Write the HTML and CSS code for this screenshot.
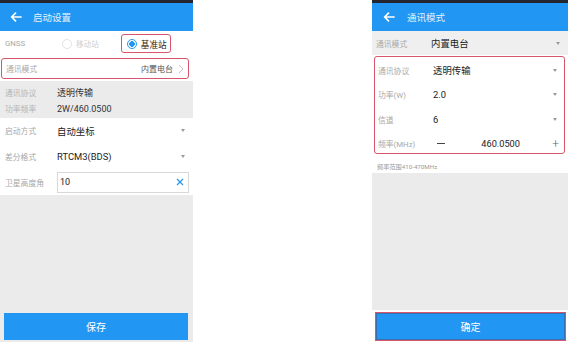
FILE: index.html
```html
<!DOCTYPE html>
<html lang="zh">
<head>
<meta charset="utf-8">
<link rel="stylesheet" href="styles.css">
</head>
<body>
<div class="page">
  <section class="screen left">
    <div class="status"></div>
    <header class="bar">
      <svg class="back" viewBox="0 0 12 10" width="12" height="10"><path d="M11 5H2M5.5 1.2L1.6 5l3.9 3.8" fill="none" stroke="#fff" stroke-width="1.7" stroke-linecap="round" stroke-linejoin="round"/></svg>
      <span class="title">启动设置</span>
    </header>
    <div class="row gnss">
      <span class="lbl">GNSS</span>
      <span class="radio off"><i class="dot"></i>移动站</span>
      <span class="radio on hl"><i class="dot"></i>基准站</span>
    </div>
    <div class="row modewrap">
      <div class="mode hl">
        <span class="lbl">通讯模式</span>
        <span class="mval">内置电台</span>
        <svg class="chev" viewBox="0 0 6 10" width="6" height="10"><path d="M1 1l4 4-4 4" fill="none" stroke="#c4c4c4" stroke-width="1"/></svg>
      </div>
    </div>
    <div class="info">
      <div class="iline"><span class="lbl">通讯协议</span><span class="val">透明传输</span></div>
      <div class="iline"><span class="lbl">功率频率</span><span class="val">2W/460.0500</span></div>
    </div>
    <div class="row sel"><span class="lbl">启动方式</span><span class="val">自动坐标</span><i class="tri"></i></div>
    <div class="row sel"><span class="lbl">差分格式</span><span class="val">RTCM3(BDS)</span><i class="tri"></i></div>
    <div class="row sel"><span class="lbl">卫星高度角</span>
      <div class="input"><span>10</span>
        <svg class="clear" viewBox="0 0 8 8" width="8" height="8"><path d="M1 1l6 6M7 1L1 7" stroke="#2196f3" stroke-width="1.2"/></svg>
      </div>
    </div>
    <div class="fill"></div>
    <div class="foot"><div class="btn">保存</div></div>
  </section>

  <section class="screen right">
    <div class="status"></div>
    <header class="bar">
      <svg class="back" viewBox="0 0 12 10" width="12" height="10"><path d="M11 5H2M5.5 1.2L1.6 5l3.9 3.8" fill="none" stroke="#fff" stroke-width="1.7" stroke-linecap="round" stroke-linejoin="round"/></svg>
      <span class="title">通讯模式</span>
    </header>
    <div class="row rsel first"><span class="lbl">通讯模式</span><span class="val">内置电台</span><i class="tri"></i></div>
    <div class="box hl">
      <div class="row rsel"><span class="lbl">通讯协议</span><span class="val">透明传输</span><i class="tri"></i></div>
      <div class="row rsel"><span class="lbl">功率(W)</span><span class="val">2.0</span><i class="tri"></i></div>
      <div class="row rsel"><span class="lbl">信道</span><span class="val">6</span><i class="tri"></i></div>
      <div class="row rsel freq"><span class="lbl">频率(MHz)</span>
        <span class="minus"></span>
        <span class="num">460.0500</span>
        <span class="plus">+</span>
      </div>
    </div>
    <div class="hint">频率范围410-470MHz</div>
    <div class="fill"></div>
    <div class="foot rfoot"><div class="btn hlbtn">确定</div></div>
  </section>
</div>
</body>
</html>
```
FILE: styles.css
```css
* { box-sizing: border-box; margin: 0; padding: 0; }
body { background: #fff; font-family: Roboto, "Noto Sans CJK SC", sans-serif; }
.page { display: flex; justify-content: space-between; width: 568px; height: 342px; }
.screen { display: flex; flex-direction: column; height: 342px; background: #fff; }
.left { width: 193px; }
.right { width: 196px; }
.status { height: 3px; background: #23262e; }
.bar { height: 28px; background: #2196f3; display: flex; align-items: center; }
.left .back { margin-left: 10px; }
.right .back { margin-left: 11px; }
.title { color: #e3f1fd; font-size: 9.5px; margin-left: 11px; font-family: "Noto Sans CJK SC", sans-serif; }
.left .title { margin-left: 11px; }
.right .title { margin-left: 12px; }
.lbl { color: #a8a8a8; font-size: 7.8px; font-family: Roboto, "Noto Sans CJK SC", sans-serif; }
.val { color: #222; font-size: 9.4px; font-family: Roboto, "Noto Sans CJK SC", sans-serif; }
.row { display: flex; align-items: center; }
.hl { border: 1px solid #d8566c; border-radius: 3px; }

.gnss { height: 25px; padding-left: 5px; }
.gnss .lbl { width: 57px; }
.radio { display: flex; align-items: center; font-size: 7.6px; font-family: "Noto Sans CJK SC", sans-serif; }
.radio .dot { width: 10px; height: 10px; border-radius: 50%; display: inline-block; margin-right: 4px; }
.radio.off { color: #cfcfcf; }
.radio.off .dot { border: 1px solid #e4e4e4; }
.radio.on { color: #222; font-size: 8.6px; margin-left: 22px; height: 19px; padding: 0 3px 0 5px; }
.radio.on .dot { border: 1.3px solid #2196f3; background: radial-gradient(circle, #2196f3 0 2.6px, #fff 3px); }

.modewrap { height: 25px; padding: 2px 4px 2px 1px; }
.mode { flex: 1; height: 21px; display: flex; align-items: center; padding: 0 4px 0 4px; }
.mode .lbl { flex: 1; }
.mval { color: #555; font-size: 8px; font-family: "Noto Sans CJK SC", sans-serif; }
.chev { margin-left: 5px; }

.info { background: #ebebeb; height: 37px; padding: 5px 0 0 5px; display: flex; flex-direction: column; gap: 3px; }
.iline { display: flex; align-items: center; height: 13px; }
.iline .lbl { width: 52px; color: #b4b4b4; }
.iline .val { font-size: 9px; color: #333; }

.sel { height: 25.7px; padding-left: 5px; padding-right: 8px; }
.sel .lbl { width: 52px; }
.sel .val { flex: 1; }
.tri { width: 0; height: 0; border-left: 2.5px solid transparent; border-right: 2.5px solid transparent; border-top: 3px solid #9a9a9a; }
.input { flex: 1; height: 21px; border: 1px solid #d8d8d8; margin-right: -4px; display: flex; align-items: center; padding: 0 4px 0 2px; font-size: 9px; color: #222; }
.input span { flex: 1; }

.fill { flex: 1; background: #ebebeb; }
.foot { background: #ebebeb; padding: 0 5px 2px 4px; }
.btn { height: 27px; background: #2196f3; color: #fff; font-size: 10px; display: flex; align-items: center; justify-content: center; font-family: "Noto Sans CJK SC", sans-serif; }

.right .first { background: #efefef; height: 24px; padding-left: 4px; padding-right: 8px; }
.rsel { height: 25px; padding-left: 3px; padding-right: 7px; }
.rsel .lbl { width: 55px; }
.rsel .val { flex: 1; }
.right .first .lbl { width: 55px; }
.box { margin: 1px 3px 0 2px; height: 98px; padding-top: 1px; }
.box .rsel { height: 24.5px; }
.freq .minus { width: 8px; height: 1px; background: #444; margin-left: 4px; }
.freq .num { flex: 1; text-align: center; font-size: 9.2px; color: #222; padding-left: 4px; }
.freq .plus { color: #666; font-size: 12px; font-weight: 300; margin-right: -2px; }
.hint { height: 19px; font-size: 6.2px; color: #9a9a9a; padding: 6px 0 0 5px; display: flex; align-items: center; font-family: Roboto, "Noto Sans CJK SC", sans-serif; }
.right .fill { margin-bottom: 2px; }
.rfoot { background: #fff; padding: 0 2px 1px 3px; }
.hlbtn { border: 1px solid #d8566c; height: 29px; background: #2196f3; box-shadow: inset 0 0 0 1px #3a6fb0; }
```
